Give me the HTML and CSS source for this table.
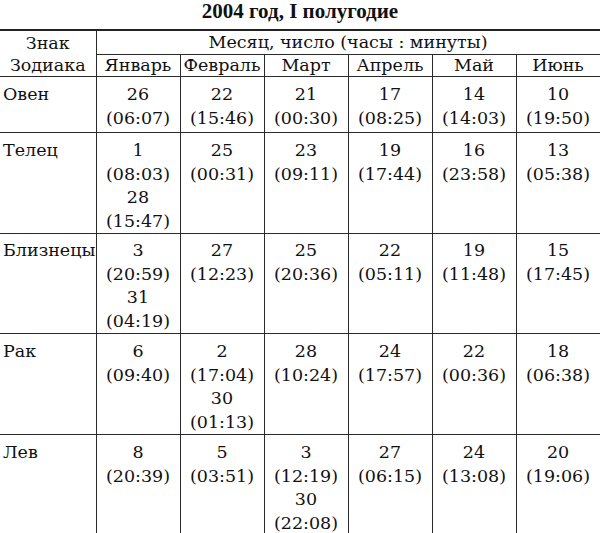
FILE: index.html
```html
<!DOCTYPE html>
<html lang="ru">
<head>
<meta charset="utf-8">
<title>2004 год, I полугодие</title>
<link rel="stylesheet" href="styles.css">
</head>
<body>
<div class="page">
  <h1 class="title">2004 год, I полугодие</h1>
  <table class="zodiac">
    <colgroup>
      <col class="c-sign">
      <col class="c-month"><col class="c-month"><col class="c-month">
      <col class="c-month"><col class="c-month"><col class="c-month">
    </colgroup>
    <thead>
      <tr class="h1">
        <th rowspan="2" class="sign-head">Знак<br>Зодиака</th>
        <th colspan="6" class="group-head">Месяц, число (часы : минуты)</th>
      </tr>
      <tr class="h2">
        <th>Январь</th><th>Февраль</th><th>Март</th><th>Апрель</th><th>Май</th><th>Июнь</th>
      </tr>
    </thead>
    <tbody>
      <tr class="r-short">
        <td class="sign">Овен</td>
        <td>26<br>(06:07)</td><td>22<br>(15:46)</td><td>21<br>(00:30)</td><td>17<br>(08:25)</td><td>14<br>(14:03)</td><td>10<br>(19:50)</td>
      </tr>
      <tr class="r-tall">
        <td class="sign">Телец</td>
        <td>1<br>(08:03)<br>28<br>(15:47)</td><td>25<br>(00:31)</td><td>23<br>(09:11)</td><td>19<br>(17:44)</td><td>16<br>(23:58)</td><td>13<br>(05:38)</td>
      </tr>
      <tr class="r-tall r-mid">
        <td class="sign">Близнецы</td>
        <td>3<br>(20:59)<br>31<br>(04:19)</td><td>27<br>(12:23)</td><td>25<br>(20:36)</td><td>22<br>(05:11)</td><td>19<br>(11:48)</td><td>15<br>(17:45)</td>
      </tr>
      <tr class="r-tall">
        <td class="sign">Рак</td>
        <td>6<br>(09:40)</td><td>2<br>(17:04)<br>30<br>(01:13)</td><td>28<br>(10:24)</td><td>24<br>(17:57)</td><td>22<br>(00:36)</td><td>18<br>(06:38)</td>
      </tr>
      <tr class="r-tall">
        <td class="sign">Лев</td>
        <td>8<br>(20:39)</td><td>5<br>(03:51)</td><td>3<br>(12:19)<br>30<br>(22:08)</td><td>27<br>(06:15)</td><td>24<br>(13:08)</td><td>20<br>(19:06)</td>
      </tr>
    </tbody>
  </table>
</div>
</body>
</html>
```

FILE: styles.css
```css
html, body {
  margin: 0;
  padding: 0;
  background: #ffffff;
}

.page {
  width: 600px;
  color: #111111;
  font-family: "DejaVu Serif", "Liberation Serif", serif;
}

.title {
  margin: 0;
  height: 29px;
  font-family: "Liberation Serif", serif;
  font-weight: bold;
  font-size: 21px;
  line-height: 22px;
  text-align: center;
}

.zodiac {
  width: 600px;
  border-collapse: collapse;
  table-layout: fixed;
  font-size: 17.5px;
  line-height: 23.5px;
  border-top: 2px solid #222;
  border-bottom: 2px solid #444;
}

.c-sign { width: 96px; }
.c-month { width: 84px; }

.zodiac th,
.zodiac td {
  padding: 0;
  font-weight: normal;
  text-align: center;
  vertical-align: top;
  border: 1px solid #2a2a2a;
}

.zodiac tr > :first-child { border-left: none; }
.zodiac tr > :last-child { border-right: 1px solid #2a2a2a; }

.sign-head {
  vertical-align: middle !important;
  padding-top: 1px !important;
}

.h1 th { height: 22px; line-height: 22px; }
.h2 th { height: 20px; line-height: 20px; }

.zodiac td {
  padding: 6px 0 0;
}

.zodiac td.sign {
  text-align: left;
  padding-left: 3px;
}

.r-short td { height: 49px; }
.r-tall td { height: 93px; }
.zodiac .r-mid td { padding-top: 5px; height: 93px; }
.zodiac .r-mid td.sign { padding-left: 3px; }
```
